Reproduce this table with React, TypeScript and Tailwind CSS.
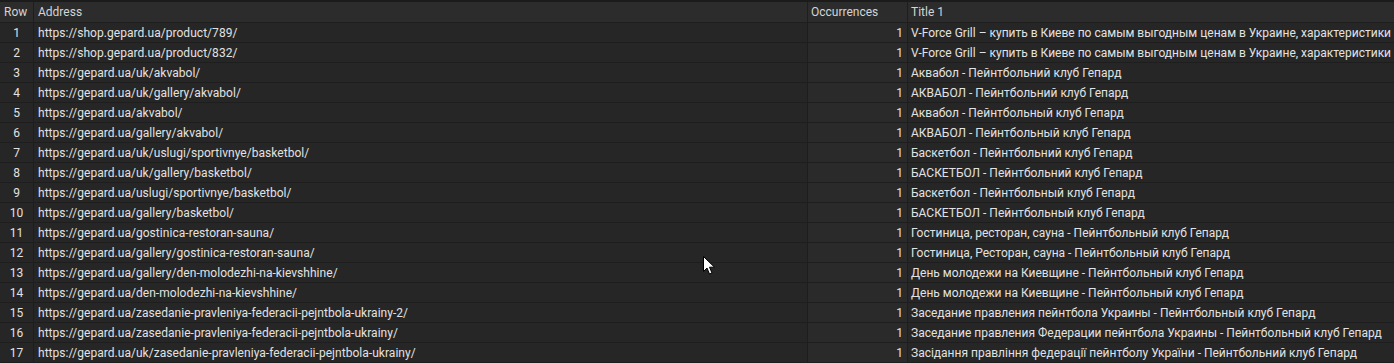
import React from 'react'

type Row = { url: string; count: number; title: string }

const rows: Row[] = [
  { url: 'https://shop.gepard.ua/product/789/', count: 1, title: 'V-Force Grill – купить в Киеве по самым выгодным ценам в Украине, характеристики' },
  { url: 'https://shop.gepard.ua/product/832/', count: 1, title: 'V-Force Grill – купить в Киеве по самым выгодным ценам в Украине, характеристики' },
  { url: 'https://gepard.ua/uk/akvabol/', count: 1, title: 'Аквабол - Пейнтбольний клуб Гепард' },
  { url: 'https://gepard.ua/uk/gallery/akvabol/', count: 1, title: 'АКВАБОЛ - Пейнтбольний клуб Гепард' },
  { url: 'https://gepard.ua/akvabol/', count: 1, title: 'Аквабол - Пейнтбольный клуб Гепард' },
  { url: 'https://gepard.ua/gallery/akvabol/', count: 1, title: 'АКВАБОЛ - Пейнтбольный клуб Гепард' },
  { url: 'https://gepard.ua/uk/uslugi/sportivnye/basketbol/', count: 1, title: 'Баскетбол - Пейнтбольний клуб Гепард' },
  { url: 'https://gepard.ua/uk/gallery/basketbol/', count: 1, title: 'БАСКЕТБОЛ - Пейнтбольний клуб Гепард' },
  { url: 'https://gepard.ua/uslugi/sportivnye/basketbol/', count: 1, title: 'Баскетбол - Пейнтбольный клуб Гепард' },
  { url: 'https://gepard.ua/gallery/basketbol/', count: 1, title: 'БАСКЕТБОЛ - Пейнтбольный клуб Гепард' },
  { url: 'https://gepard.ua/gostinica-restoran-sauna/', count: 1, title: 'Гостиница, ресторан, сауна - Пейнтбольный клуб Гепард' },
  { url: 'https://gepard.ua/gallery/gostinica-restoran-sauna/', count: 1, title: 'Гостиница, Ресторан, сауна - Пейнтбольный клуб Гепард' },
  { url: 'https://gepard.ua/gallery/den-molodezhi-na-kievshhine/', count: 1, title: 'День молодежи на Киевщине - Пейнтбольный клуб Гепард' },
  { url: 'https://gepard.ua/den-molodezhi-na-kievshhine/', count: 1, title: 'День молодежи на Киевщине - Пейнтбольный клуб Гепард' },
  { url: 'https://gepard.ua/zasedanie-pravleniya-federacii-pejntbola-ukrainy-2/', count: 1, title: 'Заседание правления пейнтбола Украины - Пейнтбольный клуб Гепард' },
  { url: 'https://gepard.ua/zasedanie-pravleniya-federacii-pejntbola-ukrainy/', count: 1, title: 'Заседание правления Федерации пейнтбола Украины - Пейнтбольный клуб Гепард' },
  { url: 'https://gepard.ua/uk/zasedanie-pravleniya-federacii-pejntbola-ukrainy/', count: 1, title: 'Засідання правління федерації пейнтболу України - Пейнтбольний клуб Гепард' },
]

// mouse pointer sitting over the grid
function Pointer() {
  return (
    <svg width="13" height="19" viewBox="0 0 13 19" className="absolute left-[703px] top-[256px]">
      <path d="M0.5 0.5 L0.5 15.5 L4 12 L6.5 18 L9 17 L6.5 11.2 L11.5 11.2 Z" fill="#ffffff" stroke="#000000" strokeWidth="1" />
    </svg>
  )
}

export default function App() {
  return (
    <div
      className="relative w-[1394px] h-[363px] overflow-hidden bg-[#1b1b1b] text-[12px] text-[#e2e2e2]"
      style={{ fontFamily: 'Roboto, "Noto Sans", sans-serif' }}
    >
      <div className="h-[2px] bg-[#1b1b1b]" />
      {/* header */}
      <div className="flex h-[21px] bg-[#2c2c2c] border-b border-[#1e1e1e] text-[#d4d4d4]">
        <div className="w-[34px] shrink-0 border-r border-[#1e1e1e] pl-[4px] flex items-center">Row</div>
        <div className="w-[774px] shrink-0 border-r border-[#1e1e1e] pl-[4px] flex items-center">Address</div>
        <div className="w-[100px] shrink-0 border-r border-[#1e1e1e] pl-[3px] flex items-center">Occurrences</div>
        <div className="flex-1 pl-[3px] flex items-center">Title 1</div>
      </div>
      {rows.map((r, i) => (
        <div key={i} className="flex h-[20px] bg-[#262626] border-b border-[#1e1e1e]">
          <div className="w-[34px] shrink-0 border-r border-[#1e1e1e] flex items-center justify-center">{i + 1}</div>
          <div className="w-[774px] shrink-0 border-r border-[#1e1e1e] pl-[4px] flex items-center whitespace-nowrap overflow-hidden tracking-[0.04px]">{r.url}</div>
          <div className="w-[100px] shrink-0 border-r border-[#1e1e1e] bg-[#2a2a2a] pr-[4px] flex items-center justify-end">{r.count}</div>
          <div className="flex-1 min-w-0 pl-[3px] flex items-center whitespace-nowrap overflow-hidden">{r.title}</div>
        </div>
      ))}
      <Pointer />
    </div>
  )
}
